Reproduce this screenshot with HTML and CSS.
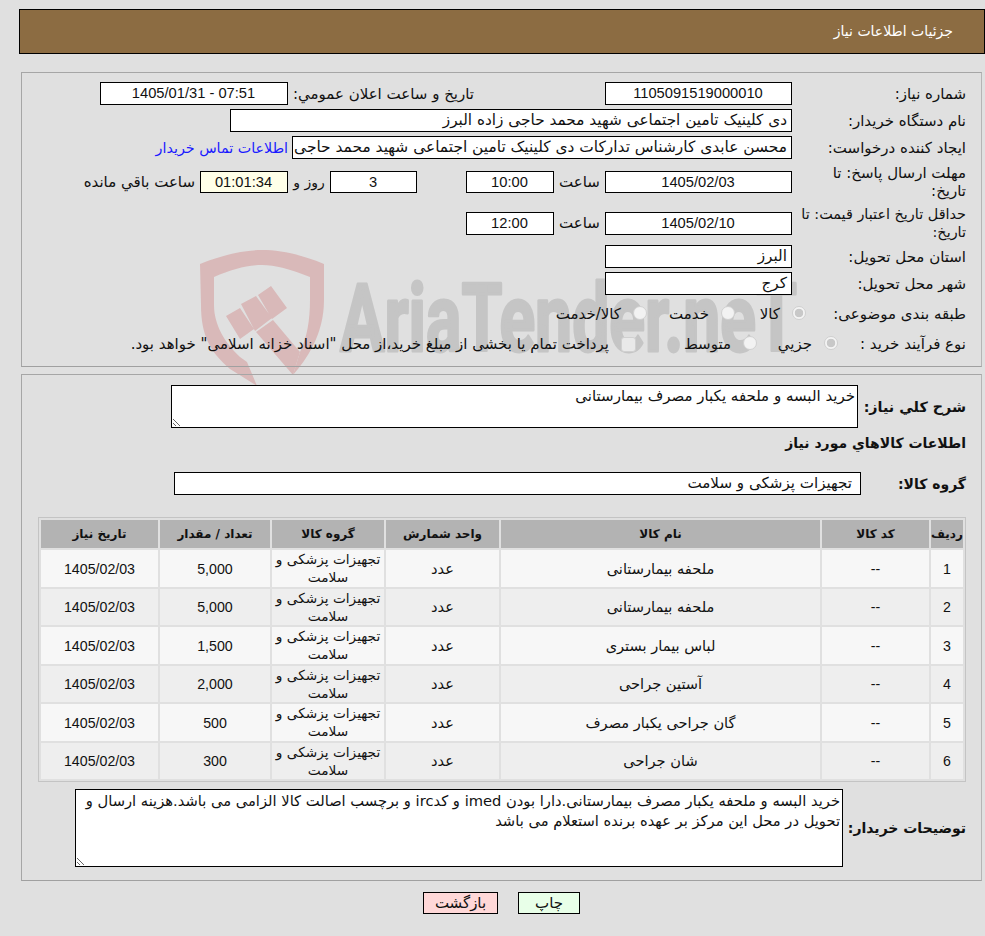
FILE: index.html
```html
<!DOCTYPE html>
<html lang="fa" dir="rtl">
<head>
<meta charset="utf-8">
<title>جزئیات اطلاعات نیاز</title>
<link rel="stylesheet" href="styles.css">
</head>
<body>
<svg class="watermark" width="620" height="160" viewBox="190 240 620 160" aria-hidden="true">
  <path class="wm-red" d="M200,264 C225,254 245,250 262,250 C280,250 300,254 324,264 L324,300 C324,335 306,360 293,375 L300,352 C307,338 310,320 310,300 L310,277 C290,269 275,265 262,265 C248,265 232,269 214,277 L214,305 C214,325 225,343 240,357 L247,362 L257,386 L230,369 C210,352 201,335 201,305 Z"/>
  <path class="wm-red" d="M226,316 L240,308 L254,329 L240,339 Z M241,304 L256,296 L272,318 L255,331 Z M258,295 L271,286 L287,308 L272,319 Z M273,320 L300,352 L293,375 L256,332 Z"/>
  <text class="wm-text" x="340" y="351" textLength="457" lengthAdjust="spacingAndGlyphs">AriaTender.neT</text>
</svg>

<header class="page-title">جزئیات اطلاعات نیاز</header>

<section class="panel panel-top">
  <div class="row">
    <label class="lab">شماره نیاز:</label>
    <output class="box w186 center num">1105091519000010</output>
    <label class="lab-mid announce">تاريخ و ساعت اعلان عمومي:</label>
    <output class="box w187 center num" dir="ltr">1405/01/31 - 07:51</output>
  </div>
  <div class="row">
    <label class="lab">نام دستگاه خریدار:</label>
    <output class="box w561">دی کلینیک تامین اجتماعی شهید محمد حاجی زاده البرز</output>
  </div>
  <div class="row">
    <label class="lab">ایجاد کننده درخواست:</label>
    <output class="box w499 clip">محسن عابدی کارشناس تدارکات دی کلینیک تامین اجتماعی شهید محمد حاجی زاده البرز</output>
    <a class="contact" href="#">اطلاعات تماس خریدار</a>
  </div>
  <div class="row row-deadline">
    <label class="lab">مهلت ارسال پاسخ: تا تاریخ:</label>
    <output class="box short w186 center num">1405/02/03</output>
    <span class="lab-time">ساعت</span>
    <output class="box short w87 center num">10:00</output>
    <output class="box short w86 center num gap-day">3</output>
    <span class="lab-day">روز و</span>
    <output class="box short w87 center num warn">01:01:34</output>
    <span class="lab-left">ساعت باقي مانده</span>
  </div>
  <div class="row row-valid">
    <label class="lab">حداقل تاریخ اعتبار قیمت: تا تاریخ:</label>
    <output class="box w186 center num">1405/02/10</output>
    <span class="lab-time">ساعت</span>
    <output class="box w87 center num">12:00</output>
  </div>
  <div class="row">
    <label class="lab">استان محل تحویل:</label>
    <output class="box w186">البرز</output>
  </div>
  <div class="row">
    <label class="lab">شهر محل تحویل:</label>
    <output class="box w186">کرج</output>
  </div>
  <div class="row row-radio">
    <label class="lab">طبقه بندی موضوعی:</label>
    <span class="opts opts-cat">
      <input class="radio on" type="radio" disabled checked><span class="opt w-kala">کالا</span>
      <input class="radio" type="radio" disabled><span class="opt w-khed">خدمت</span>
      <input class="radio" type="radio" disabled><span class="opt">کالا/خدمت</span>
    </span>
  </div>
  <div class="row row-proc">
    <label class="lab">نوع فرآیند خرید :</label>
    <span class="opts opts-proc">
      <input class="radio on" type="radio" disabled checked><span class="opt w-joz">جزيي</span>
      <input class="radio" type="radio" disabled><span class="opt w-mot">متوسط</span>
      <input class="check" type="checkbox" disabled><span class="opt">پرداخت تمام یا بخشی از مبلغ خرید،از محل "اسناد خزانه اسلامی" خواهد بود.</span>
    </span>
  </div>
</section>

<section class="panel panel-bottom">
  <div class="row row-summary">
    <label class="lab-b">شرح کلي نياز:</label>
    <textarea class="area area-summary" readonly>خرید البسه و ملحفه یکبار مصرف بیمارستانی</textarea>
  </div>
  <h2 class="lab-b goods-title">اطلاعات کالاهاي مورد نياز</h2>
  <div class="row row-group">
    <label class="lab-b group-lab">گروه کالا:</label>
    <output class="box w688">تجهیزات پزشکی و سلامت</output>
  </div>

  <table class="goods">
    <colgroup>
      <col class="c1"><col class="c2"><col class="c3"><col class="c4"><col class="c5"><col class="c6"><col class="c7">
    </colgroup>
    <thead>
      <tr><th>ردیف</th><th>کد کالا</th><th>نام کالا</th><th>واحد شمارش</th><th>گروه کالا</th><th>تعداد / مقدار</th><th>تاریخ نیاز</th></tr>
    </thead>
    <tbody>
      <tr><td class="num">1</td><td class="num">--</td><td>ملحفه بیمارستانی</td><td>عدد</td><td class="grp">تجهیزات پزشکی و سلامت</td><td class="num">5,000</td><td class="num">1405/02/03</td></tr>
      <tr><td class="num">2</td><td class="num">--</td><td>ملحفه بیمارستانی</td><td>عدد</td><td class="grp">تجهیزات پزشکی و سلامت</td><td class="num">5,000</td><td class="num">1405/02/03</td></tr>
      <tr><td class="num">3</td><td class="num">--</td><td>لباس بیمار بستری</td><td>عدد</td><td class="grp">تجهیزات پزشکی و سلامت</td><td class="num">1,500</td><td class="num">1405/02/03</td></tr>
      <tr><td class="num">4</td><td class="num">--</td><td>آستین جراحی</td><td>عدد</td><td class="grp">تجهیزات پزشکی و سلامت</td><td class="num">2,000</td><td class="num">1405/02/03</td></tr>
      <tr><td class="num">5</td><td class="num">--</td><td>گان جراحی یکبار مصرف</td><td>عدد</td><td class="grp">تجهیزات پزشکی و سلامت</td><td class="num">500</td><td class="num">1405/02/03</td></tr>
      <tr><td class="num">6</td><td class="num">--</td><td>شان جراحی</td><td>عدد</td><td class="grp">تجهیزات پزشکی و سلامت</td><td class="num">300</td><td class="num">1405/02/03</td></tr>
    </tbody>
  </table>

  <div class="row row-desc">
    <label class="lab-b desc-lab">توضیحات خریدار:</label>
    <textarea class="area area-desc" readonly>خرید البسه و ملحفه یکبار مصرف بیمارستانی.دارا بودن imed و کدirc و برچسب اصالت کالا الزامی می باشد.هزینه ارسال و تحویل در محل این مرکز بر عهده برنده استعلام می باشد</textarea>
  </div>
</section>

<nav class="actions">
  <button class="btn btn-print" type="button">چاپ</button>
  <button class="btn btn-back" type="button">بازگشت</button>
</nav>
</body>
</html>
```
FILE: styles.css
```css
html { background: #e0e0e0; }
body {
  margin: 0;
  position: relative;
  height: 936px;
  overflow: hidden;
  direction: rtl;
  font-family: "DejaVu Sans", sans-serif;
  font-size: 15px;
  line-height: 18px;
  color: #111;
}
.watermark { position: absolute; left: 190px; top: 240px; z-index: -1; direction: ltr; }
.wm-red { fill: #d9b9b9; }
.wm-text {
  font-family: Roboto, sans-serif;
  font-weight: 700;
  font-size: 95px;
  fill: #c5c5c5;
  stroke: #c5c5c5;
  stroke-width: 3px;
  stroke-linejoin: round;
  direction: ltr;
}

.page-title {
  margin-top: 9px;
  width: 966px;
  height: 45px;
  box-sizing: border-box;
  border: 1px solid #000;
  background: #8c6c42;
  color: #fff;
  padding: 0 31px;
  line-height: 43px;
  font-size: 14px;
}
.panel {
  box-sizing: border-box;
  width: 961px;
  margin-right: 3px;
  border: 1px solid #a6a6a6;
  border-right-color: #b5b5b5;
  border-bottom-color: #a0a0a0;
}
.panel-top { margin-top: 18px; height: 295px; padding: 9px 15px 0 0; display: flex; flex-direction: column; gap: 4px; }
.panel-bottom { margin-top: 7px; height: 507px; padding: 10px 15px 0 0; }

.row { display: flex; align-items: center; }
.lab { width: 174px; flex: none; box-sizing: border-box; padding-left: 6px; }
.box {
  display: block;
  box-sizing: border-box;
  height: 23px;
  border: 1px solid #000;
  background: #fff;
  padding: 0 4px 0 3px;
  line-height: 21px;
  flex: none;
  white-space: nowrap;
  font-size: 15.3px;
}
.short { height: 22px; line-height: 20px; }
.center { text-align: center; }
.box.num, .goods td.num { font-family: "Liberation Sans", sans-serif; }
.box.num { font-size: 14.7px; }
.clip { overflow: hidden; font-size: 15.4px; }
.warn { background: #ffffe8; }
.w186 { width: 187px; }
.w187 { width: 188px; }
.w87 { width: 88px; }
.w86 { width: 87px; }
.w499 { width: 500px; }
.w561 { width: 562px; }
.w688 { width: 687px; padding: 0 8px; font-size: 15.1px; }
.lab-mid { margin-right: 131px; width: 186px; }
.contact { color: #1a1aff; text-decoration: none; margin-right: 4px; white-space: nowrap; font-size: 14.3px; }
.lab-time { width: 51px; text-align: center; flex: none; }
.row-deadline { height: 38px; }
.row-valid { height: 36px; }
.row-valid .lab { font-size: 14.4px; padding-left: 2px; }
.gap-day { margin-right: 49px; }
.lab-day { width: 42px; text-align: center; flex: none; font-size: 14px; }
.lab-left { margin-right: 5px; white-space: nowrap; }
.row-radio { height: 30px; }
.row-proc { height: 22px; }
.opts { display: flex; align-items: center; }
.opts-cat { margin-right: -14px; }
.opts-proc { margin-right: -46px; }
.opt { white-space: nowrap; }
.radio, .check {
  appearance: none;
  -webkit-appearance: none;
  flex: none;
  margin: 0 0 0 12px;
  width: 14px;
  height: 14px;
  box-sizing: border-box;
  background: #f2f2f2;
  border: 1px solid #d0d0d0;
}
.radio { border-radius: 50%; position: relative; top: -1px; }
.radio.on { background: radial-gradient(circle, #c8c8c8 0 4px, #f4f4f4 4.6px); }
.check { border-radius: 3px; background: #e9e9e9; width: 15px; height: 15px; }
.w-kala { width: 45px; }
.w-khed { width: 62px; }
.w-joz { width: 55px; }
.w-mot { width: 95px; }

.lab-b { font-weight: 700; font-size: 14px; margin: 0; }
.row-summary { height: 43px; }
.row-summary .lab-b { width: 108px; flex: none; font-size: 14.3px; }
.area {
  display: block;
  box-sizing: border-box;
  border: 1px solid #000;
  border-radius: 0;
  background: #fff;
  font: inherit;
  font-size: 15px;
  color: #111;
  padding: 1px 2px;
  margin: 0;
  outline: none;
}
.area-summary { width: 687px; height: 43px; }
.goods-title { line-height: 20px; margin-top: 5px; }
.row-group { margin-top: 19px; height: 23px; }
.group-lab { width: 105px; flex: none; }
.goods {
  margin: 22px 0 0 0;
  width: 927px;
  table-layout: fixed;
  border-collapse: separate;
  border-spacing: 2px;
  border: 1px solid #c4c4c4;
  text-align: center;
}
.c1 { width: 32px; } .c2 { width: 107px; } .c3 { width: 319px; } .c4 { width: 113px; }
.c5 { width: 112px; } .c6 { width: 110px; } .c7 { width: 117px; }
.goods th { height: 28px; padding: 0; background: #b3b3b3; font-size: 12px; font-weight: 700; }
.goods td { height: 36.5px; padding: 1px 0 0; box-sizing: border-box; background: #f7f7f7; font-size: 14.6px; }
.goods tbody tr:nth-child(even) td { background: #eee; }
.goods td.num { font-size: 14.2px; }
.goods td.grp { line-height: 18px; font-size: 13.7px; padding-top: 0; }
.row-desc { margin-top: 7px; }
.desc-lab { width: 123px; flex: none; }
.area-desc { width: 768px; height: 78px; line-height: 20px; font-size: 14.7px; }

.actions { display: flex; justify-content: center; gap: 20px; margin-top: 11px; padding-left: 18px; }
.btn {
  box-sizing: border-box;
  height: 22px;
  border: 1px solid #000;
  border-radius: 0;
  font: inherit;
  line-height: 18px;
  color: #111;
  padding: 0;
}
.btn-print { width: 62px; background: #e8ffe8; }
.btn-back { width: 75px; background: #ffd8d8; }
```
